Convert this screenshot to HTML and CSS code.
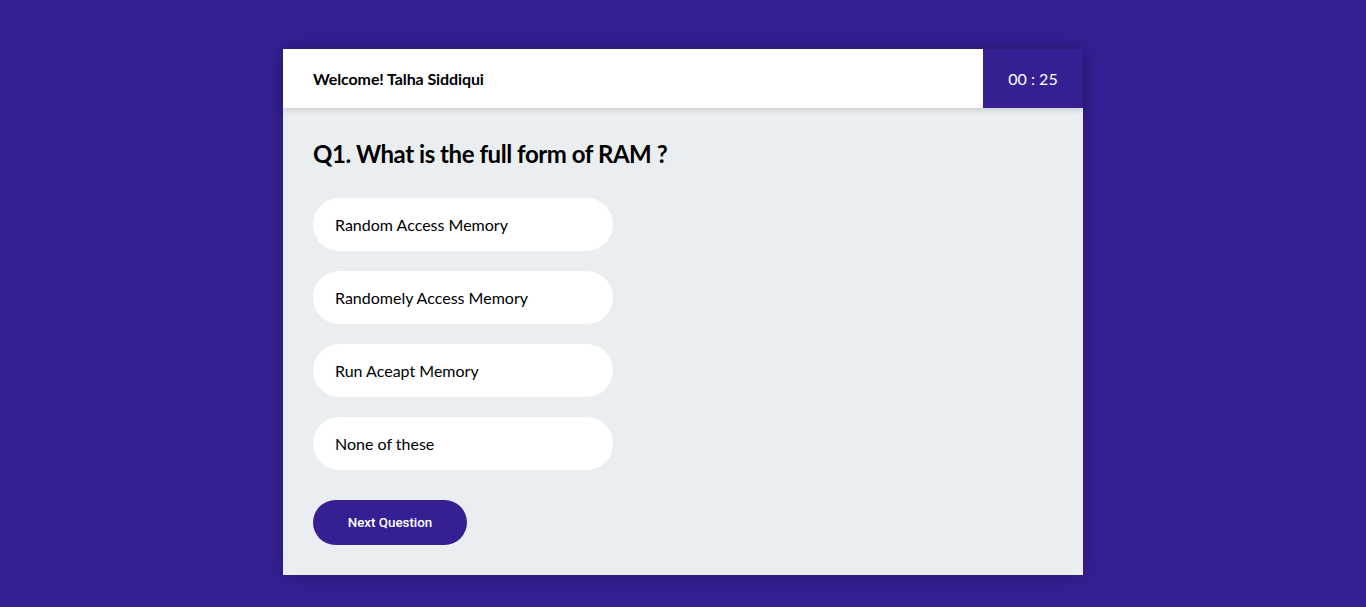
FILE: index.html
```html
<!DOCTYPE html>
<html>
<head>
<meta charset="utf-8">
<link rel="stylesheet" href="styles.css">
</head>
<body>
<div class="card">
  <header class="header">
    <div class="welcome">Welcome! Talha Siddiqui</div>
    <div class="timer">00 : 25</div>
  </header>
  <main class="content">
    <h2 class="question">Q1. What is the full form of RAM ?</h2>
    <ul class="options">
      <li class="option">Random Access Memory</li>
      <li class="option">Randomely Access Memory</li>
      <li class="option">Run Aceapt Memory</li>
      <li class="option">None of these</li>
    </ul>
    <button class="next">Next Question</button>
  </main>
</div>
</body>
</html>
```
FILE: styles.css
```css
* { box-sizing: border-box; }
html, body { margin: 0; padding: 0; }
body {
  background: #351f93;
  font-family: Lato, "Noto Sans", sans-serif;
  padding-top: 49px;
  min-height: 607px;
}
.card {
  width: 800px;
  margin: 0 auto;
  background: #ebeef0;
  box-shadow: 0 0 20px rgba(0,0,0,0.25);
}
.header {
  display: flex;
  height: 59px;
  background: #fff;
  box-shadow: 0 2px 6px rgba(0,0,0,0.15);
  position: relative;
}
.welcome {
  flex: 1;
  display: flex;
  align-items: center;
  padding-left: 30px;
  font-weight: 700;
  font-size: 16px;
  letter-spacing: -0.1px;
  color: #000;
}
.timer {
  width: 100px;
  background: #351f93;
  color: #fff;
  display: flex;
  align-items: center;
  justify-content: center;
  font-size: 16px;
}
.content {
  padding: 30px 30px 30px;
}
.question {
  margin: 0 0 30px;
  padding-top: 1px;
  font-size: 24px;
  font-weight: 700;
  letter-spacing: -0.45px;
  line-height: 29px;
  color: #000;
}
.options {
  list-style: none;
  margin: 0;
  padding: 0;
  display: flex;
  flex-direction: column;
  gap: 20px;
}
.option {
  width: 300px;
  height: 53px;
  background: #fff;
  border-radius: 27px;
  display: flex;
  align-items: center;
  padding-left: 22px;
  font-size: 16px;
  color: #000;
}
.next {
  margin-top: 30px;
  width: 154px;
  height: 45px;
  border: none;
  border-radius: 23px;
  background: #351f93;
  color: #fff;
  font-family: Roboto, "Liberation Sans", sans-serif;
  font-weight: 500;
  font-size: 13.33px;
  display: block;
}
```
